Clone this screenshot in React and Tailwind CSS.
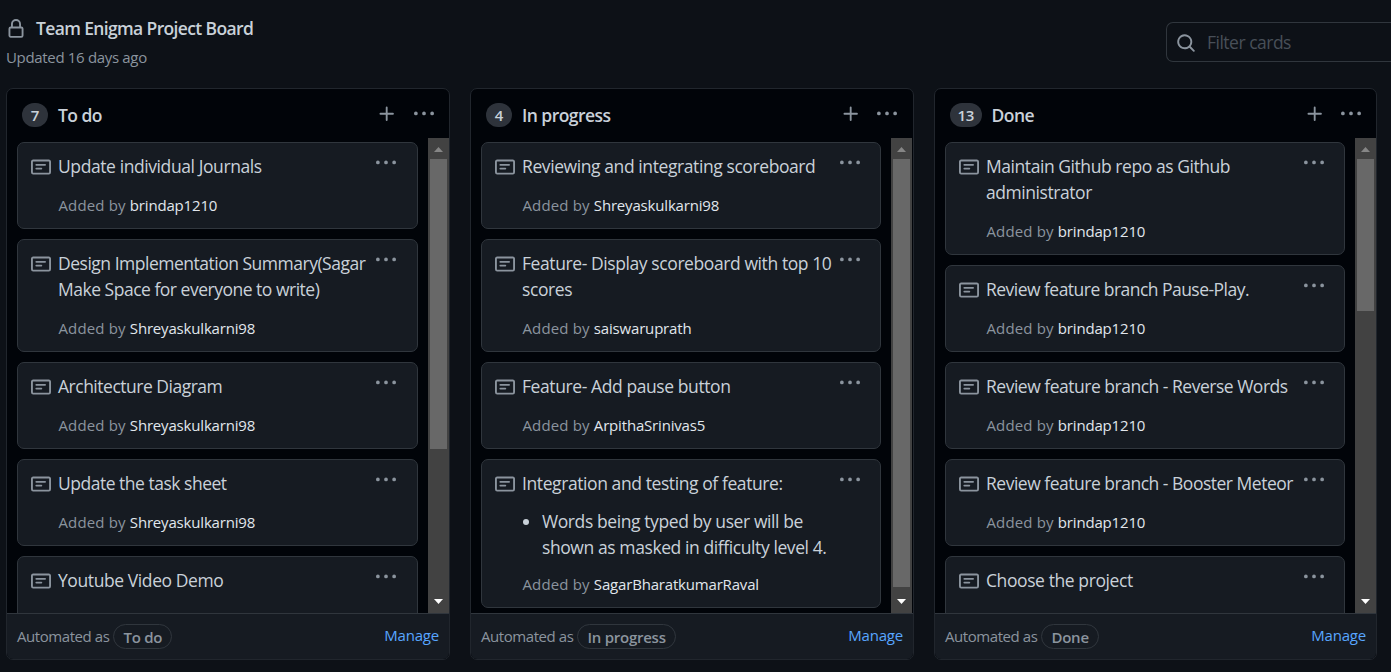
import React from "react";

const paths = {
  lock: "M4 4v2h-.25A1.75 1.75 0 002 7.75v5.5c0 .966.784 1.75 1.75 1.75h8.5A1.75 1.75 0 0014 13.25v-5.5A1.75 1.75 0 0012.25 6H12V4a4 4 0 10-8 0zm6.5 2V4a2.5 2.5 0 10-5 0v2h5zM12 7.5h.25a.25.25 0 01.25.25v5.5a.25.25 0 01-.25.25h-8.5a.25.25 0 01-.25-.25v-5.5a.25.25 0 01.25-.25H12z",
  note: "M0 3.75C0 2.784.784 2 1.75 2h12.5c.966 0 1.75.784 1.75 1.75v8.5A1.75 1.75 0 0114.25 14H1.75A1.75 1.75 0 010 12.25v-8.5zm1.75-.25a.25.25 0 00-.25.25v8.5c0 .138.112.25.25.25h12.5a.25.25 0 00.25-.25v-8.5a.25.25 0 00-.25-.25H1.75zM3.5 6.25a.75.75 0 01.75-.75h7a.75.75 0 010 1.5h-7a.75.75 0 01-.75-.75zm.75 2.25a.75.75 0 000 1.5h4a.75.75 0 000-1.5h-4z",
  plus: "M7.75 2a.75.75 0 01.75.75V7h4.25a.75.75 0 110 1.5H8.5v4.25a.75.75 0 11-1.5 0V8.5H2.75a.75.75 0 010-1.5H7V2.75A.75.75 0 017.75 2z",
  dots: "M8 9a1.5 1.5 0 100-3 1.5 1.5 0 000 3zM1.5 9a1.5 1.5 0 100-3 1.5 1.5 0 000 3zm13 0a1.5 1.5 0 100-3 1.5 1.5 0 000 3z",
  search: "M11.5 7a4.499 4.499 0 11-8.998 0A4.499 4.499 0 0111.5 7zm-.82 4.74a6 6 0 111.06-1.06l3.04 3.04a.75.75 0 11-1.06 1.06l-3.04-3.04z",
};

function Icon({ name, className = "" }) {
  return (
    <svg viewBox="0 0 16 16" className={`size-5 shrink-0 fill-[#8b949e] ${className}`} aria-hidden="true">
      <path fillRule="evenodd" d={paths[name]} />
    </svg>
  );
}

const tight = "tracking-[-0.49px]";
const normal = "tracking-[-0.41px]";

const columns = [
  {
    name: "To do",
    count: 7,
    width: "w-[444px]",
    cardWidth: "w-[401px]",
    menuGap: "mr-[21px]",
    actions: "gap-[17px] mr-0",
    thumb: "h-[290px]",
    cards: [
      { lines: ["Update individual Journals"], author: "brindap1210" },
      { lines: ["Design Implementation Summary(Sagar", "Make Space for everyone to write)"], author: "Shreyaskulkarni98", tracking: tight },
      { lines: ["Architecture Diagram"], author: "Shreyaskulkarni98", tracking: tight },
      { lines: ["Update the task sheet"], author: "Shreyaskulkarni98", tracking: tight },
      { lines: ["Youtube Video Demo"] },
    ],
  },
  {
    name: "In progress",
    count: 4,
    width: "w-[444px]",
    cardWidth: "w-[400px]",
    menuGap: "mr-5",
    actions: "gap-4 mr-px",
    thumb: "h-[428px]",
    cards: [
      { lines: ["Reviewing and integrating scoreboard"], author: "Shreyaskulkarni98" },
      { lines: ["Feature- Display scoreboard with top 10", "scores"], author: "saiswaruprath" },
      { lines: ["Feature- Add pause button"], author: "ArpithaSrinivas5" },
      {
        lines: ["Integration and testing of feature:"],
        bullet: ["Words being typed by user will be", "shown as masked in difficulty level 4."],
        author: "SagarBharatkumarRaval",
      },
    ],
  },
  {
    name: "Done",
    count: 13,
    width: "w-[443px]",
    cardWidth: "w-[400px]",
    menuGap: "mr-5",
    actions: "gap-4 mr-0",
    thumb: "h-[152px]",
    cards: [
      { lines: ["Maintain Github repo as Github", "administrator"], author: "brindap1210", tracking: "tracking-[-0.44px]" },
      { lines: ["Review feature branch Pause-Play."], author: "brindap1210", tracking: "tracking-[-0.53px]" },
      { lines: ["Review feature branch - Reverse Words"], author: "brindap1210", tracking: tight },
      { lines: ["Review feature branch - Booster Meteor"], author: "brindap1210", tracking: tight },
      { lines: ["Choose the project"] },
    ],
  },
];

function Card({ card, column }) {
  return (
    <article className={`flex min-h-[87px] shrink-0 rounded-[7px] border border-[#30363d] bg-[#161b22] pt-2.5 pb-2.5 pl-[13px] ${column.cardWidth}`}>
      <Icon name="note" className="mt-[4px]" />
      <div className={`ml-[7px] min-w-0 flex-1 whitespace-nowrap text-[17.5px] leading-[26px] text-[#c9d1d9] ${card.tracking || normal}`}>
        {card.lines.map((line) => (
          <p key={line}>{line}</p>
        ))}
        {card.bullet && (
          <ul className="mt-3 -mb-0.5 flex gap-[13px]">
            <li className="mt-[11px] ml-px size-1.5 shrink-0 rounded-full bg-[#c9d1d9]" />
            <li>
              {card.bullet.map((line) => (
                <p key={line}>{line}</p>
              ))}
            </li>
          </ul>
        )}
        {card.author && (
          <p className="mt-[13px] ml-[0.4px] text-[15px] tracking-[0.17px] text-[#8b949e]">
            Added by <span className="tracking-[-0.18px] text-[#e1e7ed]">{card.author}</span>
          </p>
        )}
      </div>
      <Icon name="dots" className={`-ml-5 ${column.menuGap}`} />
    </article>
  );
}

function Scrollbar({ thumb }) {
  return (
    <div className="ml-2.5 flex h-full w-[21px] shrink-0 flex-col items-center bg-[#424242]">
      <svg viewBox="0 0 21 21" className="h-[21px] w-[21px] shrink-0" aria-hidden="true">
        <path d="M6 14L10.5 9L15 14Z" fill="#868686" />
      </svg>
      <div className={`w-[17px] shrink-0 bg-[#686868] ${thumb}`} />
      <svg viewBox="0 0 21 21" className="mt-auto h-[21px] w-[21px] shrink-0" aria-hidden="true">
        <path d="M6 7L15 7L10.5 12Z" fill="#fff" />
      </svg>
    </div>
  );
}

function Column({ column }) {
  return (
    <section className={`flex h-[572px] shrink-0 flex-col overflow-hidden rounded-[7px] border border-[#21262d] bg-[#010409] ${column.width}`}>
      <header className="flex h-[49px] shrink-0 items-center pt-1 pr-[15px] pl-[15px]">
        <span className="mb-px flex h-6 min-w-[26px] items-center justify-center rounded-full bg-[#2e333b] px-[7.5px] text-[15px] font-semibold tracking-[-0.3px] text-[#c9d1d9]">
          {column.count}
        </span>
        <h2 className="ml-2.5 text-[17.5px] font-semibold tracking-[-0.55px] text-[#c9d1d9]">{column.name}</h2>
        <div className={`mb-[3px] ml-auto flex ${column.actions}`}>
          <Icon name="plus" />
          <Icon name="dots" />
        </div>
      </header>
      <div className="flex min-h-0 flex-1 overflow-hidden pl-2.5">
        <div className="flex h-full flex-col gap-2.5 overflow-hidden pt-1">
          {column.cards.map((card) => (
            <Card key={card.lines[0]} card={card} column={column} />
          ))}
        </div>
        <Scrollbar thumb={column.thumb} />
      </div>
      <footer className="flex h-[46px] shrink-0 items-center border-t border-[#30363d] bg-[#161b22] px-2.5 text-[15px] text-[#8b949e]">
        <span className="tracking-[-0.43px]">Automated as</span>
        <span className="ml-1 flex h-[25px] items-center rounded-full border border-[#30363d] px-[9px] pt-px font-semibold tracking-[-0.25px]">
          {column.name}
        </span>
        <a className="mb-0.5 ml-auto tracking-[-0.2px] text-[#58a6ff]">Manage</a>
      </footer>
    </section>
  );
}

export default function App() {
  return (
    <main className="h-[672px] w-[1391px] overflow-hidden bg-[#0d1117] font-['Open_Sans','Noto_Sans',sans-serif]">
      <div className="flex h-[88px] justify-between pl-1.5">
        <div className="pt-4">
          <div className="flex h-[26px] items-center">
            <Icon name="lock" />
            <h1 className="mb-0.5 ml-2.5 text-[17.5px] font-semibold tracking-[-0.64px] text-[#c9d1d9]">Team Enigma Project Board</h1>
          </div>
          <p className="mt-[3px] text-[15px] leading-[24px] tracking-[-0.33px] text-[#8b949e]">Updated 16 days ago</p>
        </div>
        <div className="mt-[22px] flex h-10 w-[225px] items-center rounded-l-[7px] border border-r-0 border-[#30363d] pl-[9px]">
          <Icon name="search" className="mt-0.5" />
          <span className="ml-[11px] text-[17.5px] tracking-[-0.5px] text-[#484f58]">Filter cards</span>
        </div>
      </div>
      <div className="flex gap-5 pl-1.5">
        {columns.map((column) => (
          <Column key={column.name} column={column} />
        ))}
      </div>
    </main>
  );
}
